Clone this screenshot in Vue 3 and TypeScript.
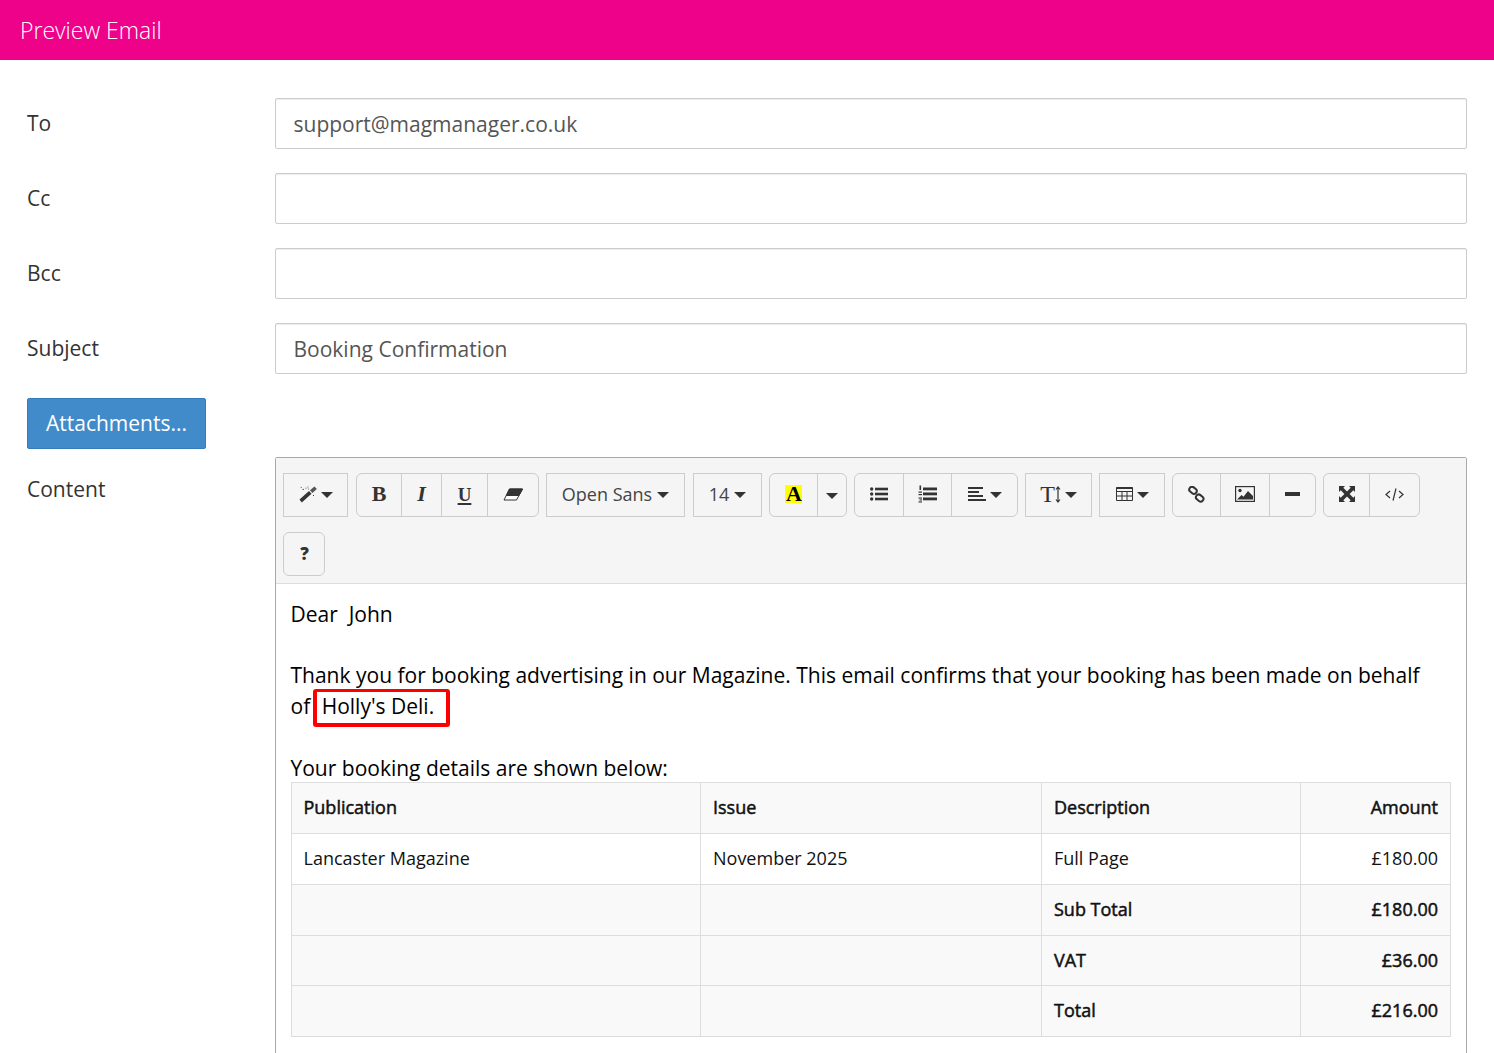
<script setup lang="ts">
const fields: { label: string; value: string }[] = [
  { label: 'To', value: 'support@magmanager.co.uk' },
  { label: 'Cc', value: '' },
  { label: 'Bcc', value: '' },
  { label: 'Subject', value: 'Booking Confirmation' },
]
const rows: { pub: string; issue: string; desc: string; amt: string; kind: string }[] = [
  { pub: 'Publication', issue: 'Issue', desc: 'Description', amt: 'Amount', kind: 'head' },
  { pub: 'Lancaster Magazine', issue: 'November 2025', desc: 'Full Page', amt: '£180.00', kind: 'plain' },
  { pub: '', issue: '', desc: 'Sub Total', amt: '£180.00', kind: 'sum' },
  { pub: '', issue: '', desc: 'VAT', amt: '£36.00', kind: 'sum short' },
  { pub: '', issue: '', desc: 'Total', amt: '£216.00', kind: 'sum' },
]
</script>

<template>
  <div class="page">
    <header class="bar">Preview Email</header>
    <main class="form">
      <div v-for="f in fields" :key="f.label" class="row">
        <label class="lab">{{ f.label }}</label>
        <input class="inp" :value="f.value" readonly />
      </div>
      <button class="attach">Attachments...</button>
      <div class="content-row">
        <div class="lab content-lab">Content</div>
        <div class="editor">
          <div class="toolbar">
            <div class="grp square">
              <button class="btn w63">
                <svg width="18" height="17" viewBox="0 0 18 17"><path d="M0.5 13.500 10 5 12.500 7.800 2.800 16.500z" fill="#333"/><path d="M11 4.200 15.500 .5 17.800 3 13.400 7z" fill="#555"/><path d="M3.600 3.400h1.200M8.600 1h.8M14 9.500h1M6.600 2.200h.8M9.400 3h.7M1.800 1.400h.8" stroke="#333" stroke-width="1" fill="none"/></svg>
                <i class="caret"></i>
              </button>
            </div>
            <div class="grp push">
              <button class="btn w45"><b class="serif">B</b></button>
              <button class="btn w40"><b class="serif"><em>I</em></b></button>
              <button class="btn w46"><b class="serif under">U</b></button>
              <button class="btn w50">
                <svg width="20" height="13" viewBox="0 0 20 13"><path d="M6.500 1H19.500L13.500 12H1z" fill="#fff" stroke="#333" stroke-width="1"/><path d="M6.500 1H19.500L16 7.500H3.400z" fill="#333" stroke="#333"/></svg>
              </button>
            </div>
            <div class="grp square">
              <button class="btn txt w137">Open Sans<i class="caret"></i></button>
            </div>
            <div class="grp square push">
              <button class="btn txt w67">14<i class="caret"></i></button>
            </div>
            <div class="grp">
              <button class="btn w48"><b class="serif hl">A</b></button>
              <button class="btn w28"><i class="caret solo"></i></button>
            </div>
            <div class="grp">
              <button class="btn w49">
                <svg width="18" height="14" viewBox="0 0 18 14"><g fill="#333"><circle cx="1.700" cy="2" r="1.700"/><circle cx="1.700" cy="7" r="1.700"/><circle cx="1.700" cy="12" r="1.700"/><rect x="5" y="0.700" width="13" height="2.600"/><rect x="5" y="5.700" width="13" height="2.600"/><rect x="5" y="10.700" width="13" height="2.600"/></g></svg>
              </button>
              <button class="btn w48">
                <svg width="19" height="18" viewBox="0 0 19 18"><g fill="#333"><rect x="5" y="2.500" width="14" height="2.800"/><rect x="5" y="7.500" width="14" height="2.800"/><rect x="5" y="12.500" width="14" height="2.800"/><rect x="1.500" y="0.500" width="1.600" height="4.500"/><rect x="0.500" y="6.500" width="3.500" height="1.200"/><rect x="0.500" y="9" width="3.500" height="1.200"/><rect x="0.500" y="12.500" width="3.500" height="1.100"/><rect x="0.500" y="16.400" width="3.500" height="1.100"/><rect x="1.500" y="14.400" width="2.500" height="1.100"/></g></svg>
              </button>
              <button class="btn w65">
                <svg width="18" height="14" viewBox="0 0 18 14"><g fill="#333"><rect width="15" height="2"/><rect y="4" width="11" height="2"/><rect y="8" width="15" height="2"/><rect y="12" width="18" height="2"/></g></svg>
                <i class="caret"></i>
              </button>
            </div>
            <div class="grp square">
              <button class="btn w65">
                <span class="serif tt">T</span>
                <svg width="6" height="17" viewBox="0 0 6 17"><path d="M3 1v15M1 3.500 3 1l2 2.500M1 13.500 3 16l2-2.500" stroke="#333" stroke-width="1.200" fill="none"/></svg>
                <i class="caret"></i>
              </button>
            </div>
            <div class="grp square">
              <button class="btn w64">
                <svg width="17" height="14" viewBox="0 0 17 14"><path d="M.5.500h16v13H.5zM.5 4.500h16M.5 9h16M6 4.500v9M11 4.500v9" fill="none" stroke="#333"/><rect x=".5" y=".5" width="16" height="1.500" fill="#333"/></svg>
                <i class="caret"></i>
              </button>
            </div>
            <div class="grp">
              <button class="btn w48">
                <svg width="17" height="17" viewBox="0 0 17 17"><g fill="none" stroke="#333" stroke-width="2"><rect x="1.200" y="1.500" width="8" height="5.500" rx="2.700" transform="rotate(40 5 4)"/><rect x="7.800" y="9.500" width="8" height="5.500" rx="2.700" transform="rotate(40 12 12)"/></g></svg>
              </button>
              <button class="btn w49">
                <svg width="20" height="16" viewBox="0 0 20 16"><rect x=".6" y=".6" width="18.800" height="14.800" fill="none" stroke="#333" stroke-width="1.200"/><circle cx="5" cy="4.500" r="1.700" fill="#333"/><path d="M2 13.500 6.500 9l2 1.800L13 5l5 5v3.500z" fill="#333"/></svg>
              </button>
              <button class="btn w45">
                <svg width="15" height="4" viewBox="0 0 15 4"><rect width="15" height="4" fill="#333"/></svg>
              </button>
            </div>
            <div class="grp">
              <button class="btn w46">
                <svg width="16" height="16" viewBox="0 0 16 16"><path d="M0 0h6L4.300 1.700 8 5.400 11.700 1.700 10 0h6v6L14.300 4.300 10.600 8l3.700 3.700L16 10v6h-6l1.700-1.700L8 10.600l-3.700 3.700L6 16H0v-6l1.700 1.700L5.400 8 1.700 4.300 0 6z" fill="#333"/></svg>
              </button>
              <button class="btn w49">
                <svg width="19" height="13" viewBox="0 0 19 13"><path d="M5 3 1 6.500 5 10M14 3l4 3.500L14 10M11 .500 8 12.500" fill="none" stroke="#333" stroke-width="1.200"/></svg>
              </button>
            </div>
            <div class="grp">
              <button class="btn help w40">?</button>
            </div>
          </div>
          <div class="body">
            <p>Dear&nbsp; John</p>
            <p class="gap">Thank you for booking advertising in our Magazine. This email confirms that your booking has been made on behalf <span class="nw">of<span class="mark">Holly's Deli.</span></span></p>
            <p class="gap last">Your booking details are shown below:</p>
            <table class="tbl">
              <colgroup><col class="c1" /><col class="c2" /><col class="c3" /><col /></colgroup>
              <tbody>
                <tr v-for="(r, i) in rows" :key="i" :class="r.kind">
                  <td>{{ r.pub }}</td>
                  <td>{{ r.issue }}</td>
                  <td>{{ r.desc }}</td>
                  <td class="num">{{ r.amt }}</td>
                </tr>
              </tbody>
            </table>
          </div>
        </div>
      </div>
    </main>
  </div>
</template>

<style>
html, body { margin: 0; overflow: hidden; }
</style>

<style scoped>
* { box-sizing: border-box; }
.page { height: 1053px; overflow: hidden; font-family: "Open Sans", sans-serif; color: #333; background: #fff; }
.bar { height: 60px; background: #ee028a; color: #fff; font-size: 23px; font-weight: 300; line-height: 60px; padding-left: 20px; }
.form { padding: 38px 27px 0; }
.row { display: flex; align-items: flex-start; height: 51px; margin-bottom: 24px; }
.lab { width: 248px; flex: none; font-size: 21px; line-height: 50px; }
.inp { flex: 1; height: 51px; border: 1px solid #ccc; border-radius: 2px; padding: 0 17.500px; font: 21px "Open Sans", sans-serif; color: #555; background: #fff; box-shadow: inset 0 1px 1px rgba(0,0,0,.075); outline: none; }
.attach { display: block; width: 179px; height: 51px; background: #428bca; border: 1px solid #357ebd; border-radius: 2px; color: #fff; font: 21px "Open Sans", sans-serif; padding: 0 0 2px; margin-bottom: 8px; }
.content-row { display: flex; align-items: flex-start; }
.content-lab { line-height: 65px; }
.editor { flex: 1; height: 700px; border: 1px solid #a9a9a9; border-radius: 2px; }
.toolbar { display: flex; flex-wrap: wrap; column-gap: 7px; row-gap: 15px; padding: 15px 7px 7px; background: #f5f5f5; border-bottom: 1px solid #ddd; height: 126px; align-content: flex-start; }
.grp { display: flex; height: 44px; border: 1px solid #ccc; border-radius: 6px; overflow: hidden; background: #f5f5f5; }
.grp.square { border-radius: 0; }
.push { margin-left: 1px; }
.btn { height: 42px; border: none; border-right: 1px solid #ccc; background: transparent; padding: 0 0 2px; display: flex; align-items: center; justify-content: center; gap: 4px; color: #333; font-family: "Open Sans", sans-serif; flex: none; }
.btn:last-child { border-right: none; }
.w28 { width: 28px; } .w40 { width: 40px; } .w45 { width: 45px; } .w46 { width: 46px; }
.w48 { width: 48px; } .w49 { width: 49px; } .w50 { width: 50px; } .w63 { width: 63px; } .w64 { width: 64px; }
.w65 { width: 65px; } .w67 { width: 67px; } .w137 { width: 137px; }
.txt { font-size: 18px; gap: 5px; color: #444; }
.caret { display: inline-block; width: 0; height: 0; border-top: 6px solid #333; border-left: 6px solid transparent; border-right: 6px solid transparent; margin-top: 2px; }
.solo { margin-top: 3px; }
.serif { font-family: "Liberation Serif", serif; font-size: 22px; line-height: 1; }
.under { text-decoration: underline; text-decoration-thickness: 2px; text-underline-offset: 2px; font-size: 19px; }
.hl { background: #ff0; color: #000; padding: 0 1px; font-size: 22px; line-height: 18px; width: 17px; display: inline-block; text-align: center; }
.tt { font-size: 24px; font-weight: 400; margin-right: -4px; }
.help { font-size: 17px; font-weight: 800; padding-left: 1px; }
.body { padding: 15px 15px 0; color: #000; font-size: 21px; line-height: 30.600px; }
.body p { margin: 0 0 0 -.5px; }
.body .gap { margin-top: 30.600px; }
.body .last { margin-top: 32px; margin-bottom: -2px; }
.nw { white-space: nowrap; }
.mark { border: 4px solid #f00; border-top-width: 3px; border-radius: 3px; padding: 0 12px 3px 5px; margin-left: 2.500px; }
.tbl { width: 1160px; table-layout: fixed; border-collapse: collapse; font-size: 18px; line-height: 24px; color: #111; }
.c1 { width: 409px; } .c2 { width: 341px; } .c3 { width: 259px; }
.tbl td { border: 1px solid #ddd; height: 51px; padding: 0 12px 2px; vertical-align: middle; }
.tbl td:first-child { padding-left: 11.500px; }
.tbl .short td { height: 50px; padding-bottom: 0; }
.head td, .sum td { background: #f9f9f9; -webkit-text-stroke: .5px #111; }
.num { text-align: right; }
</style>
